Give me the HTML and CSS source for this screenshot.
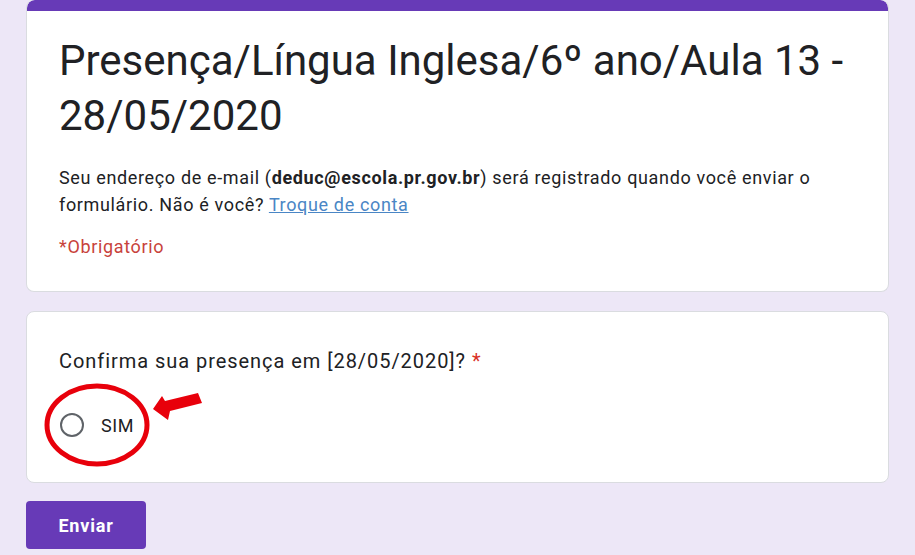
FILE: index.html
```html
<!DOCTYPE html>
<html lang="pt-BR">
<head>
<meta charset="utf-8">
<title>Presença</title>
<link rel="stylesheet" href="styles.css">
</head>
<body>
<main class="form">
  <section class="card header-card">
    <div class="topbar"></div>
    <div class="header-body">
      <h1 class="title">Presença/Língua Inglesa/6º ano/Aula 13 - 28/05/2020</h1>
      <p class="email">Seu endereço de e-mail (<b>deduc@escola.pr.gov.br</b>) será registrado quando você enviar o formulário. Não é você? <a href="#" class="link">Troque de conta</a></p>
      <p class="required">*Obrigatório</p>
    </div>
  </section>

  <section class="card question-card">
    <p class="question">Confirma sua presença em [28/05/2020]? <span class="star">*</span></p>
    <div class="option">
      <span class="radio"></span>
      <span class="option-label">SIM</span>
      <svg class="annot" width="220" height="100" viewBox="0 0 220 100" aria-hidden="true">
        <ellipse cx="54" cy="46" rx="50" ry="39" fill="none" stroke="#e8000b" stroke-width="5"/>
        <polygon points="110,30 119,17 122,22 155,14 159,24 127,32 125,41" fill="#e8000b"/>
      </svg>
    </div>
  </section>

  <div class="actions">
    <button class="submit" type="button">Enviar</button>
  </div>
</main>
</body>
</html>
```

FILE: styles.css
```css
* { box-sizing: border-box; }
html, body { margin: 0; padding: 0; }
body {
  background: #ede7f7;
  font-family: Roboto, "Liberation Sans", Arial, sans-serif;
  color: #202124;
  width: 915px;
  height: 555px;
  overflow: hidden;
}
.form {
  width: 863px;
  margin-left: 26px;
  display: flex;
  flex-direction: column;
}
.card {
  background: #fff;
  border: 1px solid #dadce0;
  border-radius: 8px;
}
.header-card {
  border-top: none;
  overflow: hidden;
}
.topbar {
  height: 11px;
  background: #673ab7;
  border-radius: 8px 8px 0 0;
}
.header-body {
  padding: 22px 32px 31px 32px;
}
.title {
  margin: 0;
  font-weight: 400;
  font-size: 42px;
  line-height: 55px;
  color: #202124;
}
.email {
  margin: 21px 0 0 0;
  font-size: 18px;
  letter-spacing: 0.65px;
  line-height: 27px;
  color: #202124;
}
.email b { font-weight: 700; }
.link {
  color: #4a86c5;
  text-decoration: underline;
}
.required {
  margin: 15px 0 0 0;
  font-size: 18px;
  letter-spacing: 0.65px;
  line-height: 27px;
  color: #c8423b;
}
.question-card {
  margin-top: 19px;
  height: 172px;
  padding: 36px 32px 0 32px;
}
.question {
  margin: 0;
  font-size: 20px;
  letter-spacing: 0.95px;
  line-height: 26px;
  color: #202124;
}
.star { color: #d93025; }
.option {
  position: relative;
  display: flex;
  align-items: center;
  margin-top: 38px;
  height: 26px;
}
.radio {
  width: 24px;
  height: 24px;
  border: 2px solid #5f6368;
  border-radius: 50%;
  margin-left: 1px;
}
.option-label {
  margin-left: 17px;
  font-size: 18px;
  letter-spacing: 0.6px;
  color: #202124;
}
.annot {
  position: absolute;
  left: -16px;
  top: -33px;
}
.actions {
  margin-top: 18px;
}
.submit {
  width: 120px;
  height: 48px;
  border: none;
  border-radius: 4px;
  background: #673ab7;
  color: #fff;
  font-family: Roboto, "Liberation Sans", Arial, sans-serif;
  font-size: 18px;
  font-weight: 700;
  letter-spacing: 0.8px;
}
```
